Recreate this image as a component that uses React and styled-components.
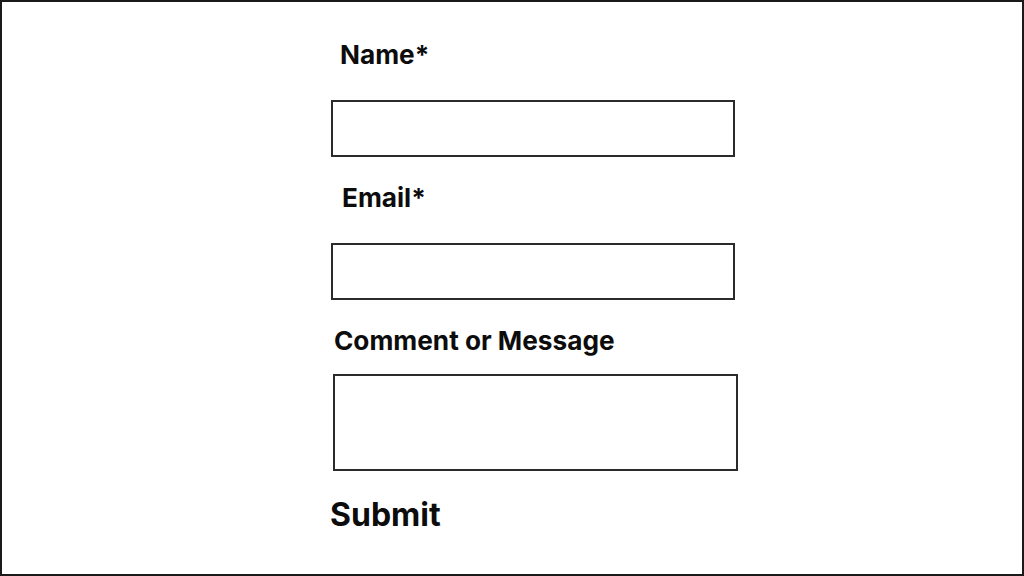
import React from "react";
import styled, { createGlobalStyle } from "styled-components";

const Global = createGlobalStyle`
  html, body { margin: 0; padding: 0; background: #fff; }
  * { box-sizing: border-box; }
`;

const Frame = styled.div`
  width: 1024px;
  height: 576px;
  border: 2px solid #1a1a1a;
  background: #fff;
  font-family: Inter, Lato, sans-serif;
  color: #0c0c0c;
  overflow: hidden;
`;

const Form = styled.form`
  display: flex;
  flex-direction: column;
  align-items: flex-start;
  padding: 37px 0 0 327px;
`;

const Label = styled.label`
  display: block;
  font-size: 26.2px;
  line-height: 32px;
  font-weight: 700;
  margin-left: ${(p) => p.$indent || 0}px;
  margin-top: ${(p) => p.$gap || 0}px;
`;

const Box = styled.input`
  display: block;
  width: 404px;
  height: 57px;
  margin-top: ${(p) => p.$gap || 0}px;
  margin-left: ${(p) => p.$indent || 0}px;
  border: 2px solid #2b2b2b;
  border-radius: 0;
  background: #fff;
  padding: 0 10px;
  font: inherit;
  font-size: 20px;
  outline: none;
`;

const Area = styled.textarea`
  display: block;
  width: 405px;
  height: 97px;
  margin-top: ${(p) => p.$gap || 0}px;
  margin-left: ${(p) => p.$indent || 0}px;
  border: 2px solid #2b2b2b;
  border-radius: 0;
  background: #fff;
  padding: 8px 10px;
  font: inherit;
  font-size: 20px;
  resize: none;
  outline: none;
`;

const Submit = styled.button`
  margin-top: 25px;
  margin-left: 1px;
  padding: 0;
  border: none;
  background: none;
  font-family: inherit;
  font-size: 32px;
  line-height: 38px;
  font-weight: 700;
  color: #0c0c0c;
  cursor: pointer;
`;

export default function App() {
  return (
    <Frame>
      <Global />
      <Form onSubmit={(e) => e.preventDefault()}>
        <Label htmlFor="name" $indent={11}>Name*</Label>
        <Box id="name" type="text" $gap={29} $indent={2} />
        <Label htmlFor="email" $indent={13} $gap={25}>Email*</Label>
        <Box id="email" type="email" $gap={29} $indent={2} />
        <Label htmlFor="msg" $indent={5} $gap={25}>Comment or Message</Label>
        <Area id="msg" $gap={17} $indent={4} />
        <Submit type="submit">Submit</Submit>
      </Form>
    </Frame>
  );
}
